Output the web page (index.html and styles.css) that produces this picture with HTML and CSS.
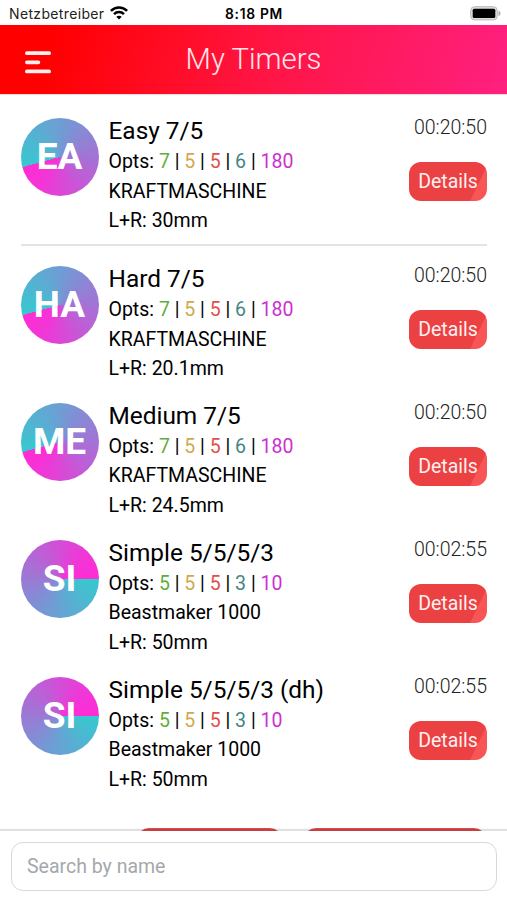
FILE: index.html
```html
<!DOCTYPE html>
<html lang="en">
<head>
<meta charset="utf-8">
<title>My Timers</title>
<link rel="stylesheet" href="styles.css">
</head>
<body>
<div class="app">
  <div class="status">
    <div class="carrier"><span>Netzbetreiber</span>
      <svg class="wifi" width="18" height="14" viewBox="0 0 18 14" fill="none" stroke="#000" stroke-width="2.5"><path d="M.9 4.900C5.400.200 12.600.200 17.100 4.900"/><path d="M4 8.200c2.800-2.800 7.200-2.800 10 0"/><path d="M9 13.500 6.300 10.700c1.500-1.400 3.900-1.400 5.400 0z" fill="#000" stroke="none"/></svg>
    </div>
    <div class="clock">8:18 PM</div>
    <svg class="battery" width="31" height="15" viewBox="0 0 31 15"><rect x=".7" y=".7" width="26.600" height="13.200" rx="4" fill="#ddd" stroke="#bbb"/><rect x="2.700" y="2.700" width="22.600" height="9.300" rx="1.500" fill="#000"/><path d="M28.500 4.800c2.600 1 2.600 4.200 0 5.200z" fill="#aaa"/></svg>
  </div>
  <header class="header">
    <svg class="menu" width="26" height="23" viewBox="0 0 26 23" stroke="#fff" stroke-opacity=".93" stroke-width="3.800" stroke-linecap="round"><path d="M1.900 2.200h22.200M1.900 11.300h11.500M1.900 20.400h22.200"/></svg>
    <h1 class="title">My Timers</h1>
  </header>
  <main class="list">
    <section class="timer pinned">
      <div class="avatar west"><span>EA</span></div>
      <div class="info">
        <h2 class="name">Easy 7/5</h2>
        <p>Opts: <span class="green">7</span> | <span class="gold">5</span> | <span class="red">5</span> | <span class="teal">6</span> | <span class="violet">180</span></p>
        <p>KRAFTMASCHINE</p>
        <p>L+R: 30mm</p>
      </div>
      <div class="side"><time>00:20:50</time><button class="details">Details</button></div>
    </section>
    <section class="timer">
      <div class="avatar west"><span>HA</span></div>
      <div class="info">
        <h2 class="name">Hard 7/5</h2>
        <p>Opts: <span class="green">7</span> | <span class="gold">5</span> | <span class="red">5</span> | <span class="teal">6</span> | <span class="violet">180</span></p>
        <p>KRAFTMASCHINE</p>
        <p>L+R: 20.1mm</p>
      </div>
      <div class="side"><time>00:20:50</time><button class="details">Details</button></div>
    </section>
    <section class="timer">
      <div class="avatar west"><span>ME</span></div>
      <div class="info">
        <h2 class="name">Medium 7/5</h2>
        <p>Opts: <span class="green">7</span> | <span class="gold">5</span> | <span class="red">5</span> | <span class="teal">6</span> | <span class="violet">180</span></p>
        <p>KRAFTMASCHINE</p>
        <p>L+R: 24.5mm</p>
      </div>
      <div class="side"><time>00:20:50</time><button class="details">Details</button></div>
    </section>
    <section class="timer">
      <div class="avatar east"><span>SI</span></div>
      <div class="info">
        <h2 class="name">Simple 5/5/5/3</h2>
        <p>Opts: <span class="green">5</span> | <span class="gold">5</span> | <span class="red">5</span> | <span class="teal">3</span> | <span class="violet">10</span></p>
        <p>Beastmaker 1000</p>
        <p>L+R: 50mm</p>
      </div>
      <div class="side"><time>00:02:55</time><button class="details">Details</button></div>
    </section>
    <section class="timer">
      <div class="avatar east"><span>SI</span></div>
      <div class="info">
        <h2 class="name">Simple 5/5/5/3 (dh)</h2>
        <p>Opts: <span class="green">5</span> | <span class="gold">5</span> | <span class="red">5</span> | <span class="teal">3</span> | <span class="violet">10</span></p>
        <p>Beastmaker 1000</p>
        <p>L+R: 50mm</p>
      </div>
      <div class="side"><time>00:02:55</time><button class="details">Details</button></div>
    </section>
    <div class="actions"><div class="action short"></div><div class="action long"></div></div>
  </main>
  <footer class="footer"><input class="search" type="text" placeholder="Search by name" aria-label="Search by name"></footer>
</div>
</body>
</html>
```
FILE: styles.css
```css
* { box-sizing: border-box; }
body { margin: 0; background: #fff; color: #000; font-family: Roboto, "Liberation Sans", sans-serif; }
h1, h2, p { margin: 0; font-weight: 400; }
.app { height: 900px; display: flex; flex-direction: column; overflow: hidden; }
.status { flex: none; height: 25px; display: grid; grid-template-columns: 1fr auto 1fr; align-items: center; padding: 2px 6px 0 9px; font-family: Inter, sans-serif; font-size: 14px; }
.carrier { display: flex; align-items: center; gap: 5.5px; color: #222; letter-spacing: .35px; }
.wifi { margin-top: -2px; }
.clock { font-weight: 600; font-size: 13.8px; letter-spacing: .7px; margin-right: 2px; }
.battery { justify-self: end; margin-top: -1px; }
.header { flex: none; height: 69px; display: grid; grid-template-columns: 26px 1fr 26px; align-items: center; padding: 0 25px; background: linear-gradient(105deg, #f00 10%, #ff1440 50%, #ff2080 100%); box-shadow: 0 1px 1px rgba(0, 0, 0, .12); }
.menu { margin-top: 5px; }
.title { margin-top: -1px; text-align: center; font-size: 29.3px; line-height: 34px; font-weight: 300; color: #ffe4e9; }
.list { flex: 1; min-height: 0; overflow: hidden; padding: 22px 20px 0 20.5px; }
.timer { display: flex; align-items: flex-start; height: 136.9px; }
.pinned { height: 130px; border-bottom: 2px solid #e4e4e4; margin-bottom: 18px; }
.avatar { flex: none; width: 78px; height: 78px; margin: 2px 10px 0 0; border-radius: 50%; display: flex; align-items: center; justify-content: center; color: #fff; font-size: 37px; line-height: 40px; font-weight: 700; }
.west { background: conic-gradient(from 255deg, #37c8cf, #6c9fd4 28%, #a373d5 54%, #f136d7 88%, #ff2cd4); }
.east { background: conic-gradient(from 90deg, #37c8cf, #6c9fd4 28%, #a373d5 54%, #f136d7 88%, #ff2cd4); }
.info { flex: 1; font-size: 19.5px; line-height: 29.3px; white-space: nowrap; }
.name { margin-bottom: 2px; font-size: 24.4px; line-height: 29.3px; }
.green { color: #5fae3b; }
.gold { color: #d2a84f; }
.red { color: #df5049; }
.teal { color: #438583; }
.violet { color: #cb30d1; }
.side { flex: none; display: flex; flex-direction: column; align-items: flex-end; }
.side time { font-size: 19.5px; line-height: 24px; font-weight: 300; color: #222; }
.details { width: 78px; height: 39px; margin-top: 22px; padding: 0; border: 0; border-radius: 12px; color: #fff0f0; font-family: inherit; font-size: 19.5px; background: linear-gradient(116deg, #eb4143 82%, #f85557 83%); }
.actions { display: flex; gap: 22px; padding: 16px 0 0 116.5px; }
.action { flex: none; height: 39px; border-radius: 12px; background: #df4c4b; }
.short { width: 145px; }
.long { width: 182px; }
.footer { flex: none; position: relative; height: 69px; padding: 11px 10px 0 11px; background: #fff; box-shadow: 0 -2px 1px rgba(0, 0, 0, .12); }
.search { display: block; width: 100%; height: 49px; padding: 0 15px; border: 1.5px solid #d8d8d8; border-radius: 12px; background: #fff; font-family: inherit; font-size: 19.5px; }
.search::placeholder { color: #a4a8ad; opacity: 1; }
```
